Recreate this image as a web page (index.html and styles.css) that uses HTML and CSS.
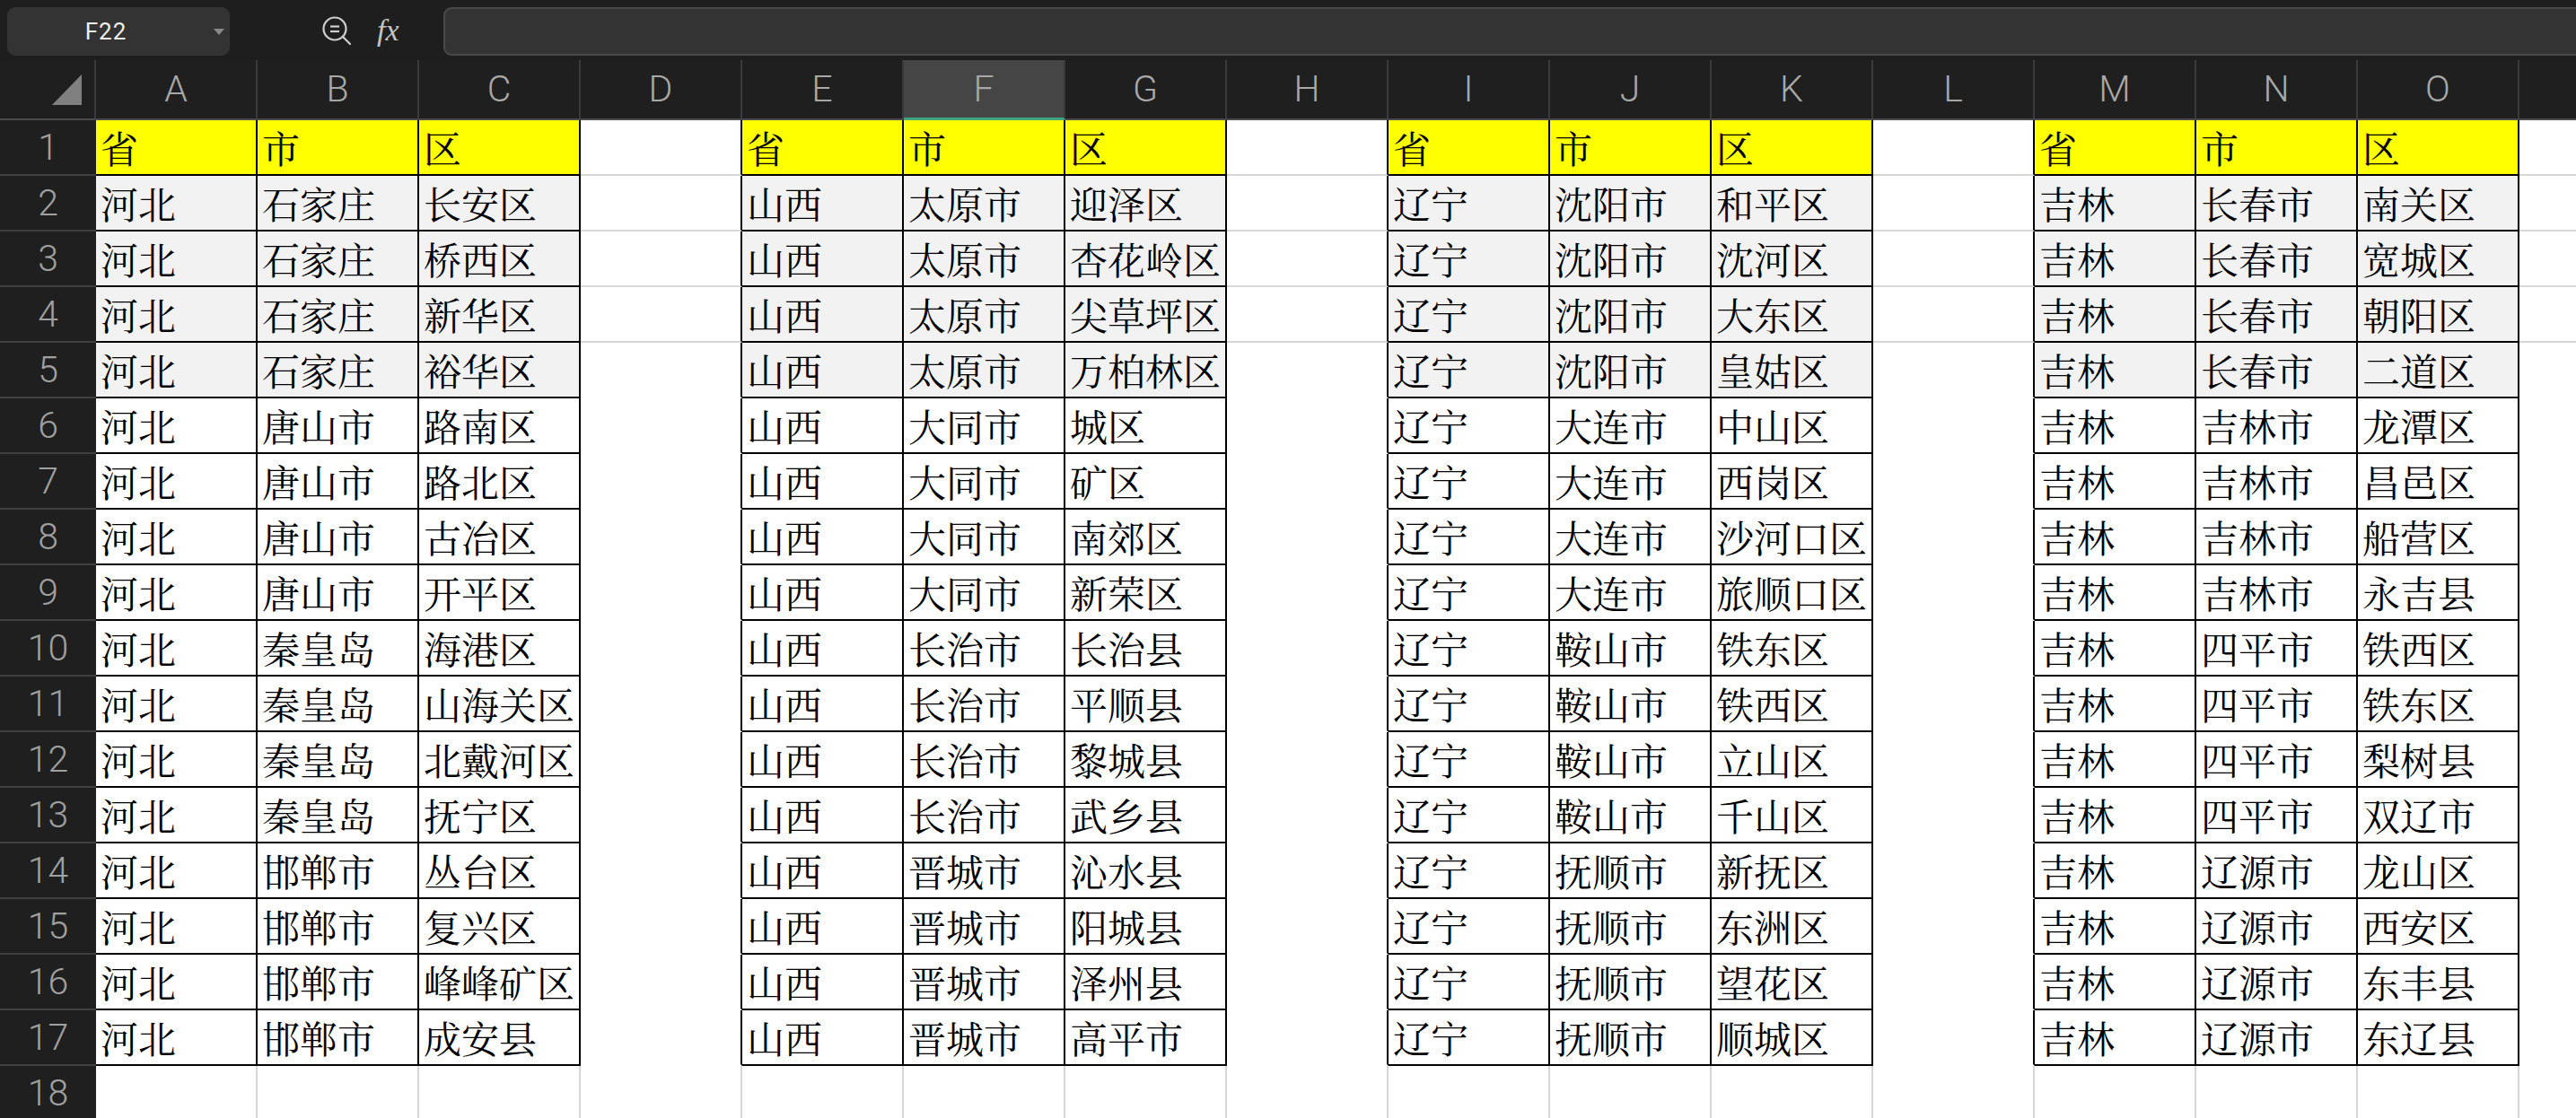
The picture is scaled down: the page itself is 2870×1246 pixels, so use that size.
FILE: index.html
```html
<!DOCTYPE html>
<html lang="zh-CN">
<head>
<meta charset="utf-8">
<title>Sheet</title>
<link rel="stylesheet" href="styles.css">
</head>
<body>
<div class="toolbar">
  <div class="namebox"><span class="ref">F22</span><span class="caret"></span></div>
  <svg class="zoom" width="36" height="36" viewBox="0 0 36 36"><circle cx="18" cy="18" r="12.5" fill="none" stroke="#cfcfcf" stroke-width="2.2"/><line x1="27" y1="27" x2="36" y2="36" stroke="#cfcfcf" stroke-width="2.2" stroke-linecap="round"/><line x1="13" y1="15.5" x2="23" y2="15.5" stroke="#cfcfcf" stroke-width="2.2"/><line x1="13" y1="21" x2="23" y2="21" stroke="#cfcfcf" stroke-width="2.2"/></svg>
  <span class="fx">fx</span>
  <div class="formula"></div>
</div>
<div class="sheet">
  <div class="corner"><svg width="33" height="34" viewBox="0 0 33 34"><polygon points="0,34 33,34 33,0" fill="#808080"/></svg></div>
  <div class="ch">A</div><div class="ch">B</div><div class="ch">C</div><div class="ch">D</div><div class="ch">E</div><div class="ch sel">F</div><div class="ch">G</div><div class="ch">H</div><div class="ch">I</div><div class="ch">J</div><div class="ch">K</div><div class="ch">L</div><div class="ch">M</div><div class="ch">N</div><div class="ch">O</div><div class="ch"></div>

  <div class="rh">1</div>
  <div class="c d y">省</div><div class="c d y">市</div><div class="c d y">区</div><div class="c e g"></div>
  <div class="c d y">省</div><div class="c d y">市</div><div class="c d y">区</div><div class="c e g"></div>
  <div class="c d y">省</div><div class="c d y">市</div><div class="c d y">区</div><div class="c e g"></div>
  <div class="c d y">省</div><div class="c d y">市</div><div class="c d y">区</div><div class="c g"></div>

  <div class="rh">2</div>
  <div class="c d s">河北</div><div class="c d s">石家庄</div><div class="c d s">长安区</div><div class="c e g"></div>
  <div class="c d s">山西</div><div class="c d s">太原市</div><div class="c d s">迎泽区</div><div class="c e g"></div>
  <div class="c d s">辽宁</div><div class="c d s">沈阳市</div><div class="c d s">和平区</div><div class="c e g"></div>
  <div class="c d s">吉林</div><div class="c d s">长春市</div><div class="c d s">南关区</div><div class="c g"></div>

  <div class="rh">3</div>
  <div class="c d s">河北</div><div class="c d s">石家庄</div><div class="c d s">桥西区</div><div class="c e g"></div>
  <div class="c d s">山西</div><div class="c d s">太原市</div><div class="c d s">杏花岭区</div><div class="c e g"></div>
  <div class="c d s">辽宁</div><div class="c d s">沈阳市</div><div class="c d s">沈河区</div><div class="c e g"></div>
  <div class="c d s">吉林</div><div class="c d s">长春市</div><div class="c d s">宽城区</div><div class="c g"></div>

  <div class="rh">4</div>
  <div class="c d s">河北</div><div class="c d s">石家庄</div><div class="c d s">新华区</div><div class="c e g"></div>
  <div class="c d s">山西</div><div class="c d s">太原市</div><div class="c d s">尖草坪区</div><div class="c e g"></div>
  <div class="c d s">辽宁</div><div class="c d s">沈阳市</div><div class="c d s">大东区</div><div class="c e g"></div>
  <div class="c d s">吉林</div><div class="c d s">长春市</div><div class="c d s">朝阳区</div><div class="c g"></div>

  <div class="rh">5</div>
  <div class="c d s">河北</div><div class="c d s">石家庄</div><div class="c d s">裕华区</div><div class="c e"></div>
  <div class="c d s">山西</div><div class="c d s">太原市</div><div class="c d s">万柏林区</div><div class="c e"></div>
  <div class="c d s">辽宁</div><div class="c d s">沈阳市</div><div class="c d s">皇姑区</div><div class="c e"></div>
  <div class="c d s">吉林</div><div class="c d s">长春市</div><div class="c d s">二道区</div><div class="c"></div>

  <div class="rh">6</div>
  <div class="c d">河北</div><div class="c d">唐山市</div><div class="c d">路南区</div><div class="c e"></div>
  <div class="c d">山西</div><div class="c d">大同市</div><div class="c d">城区</div><div class="c e"></div>
  <div class="c d">辽宁</div><div class="c d">大连市</div><div class="c d">中山区</div><div class="c e"></div>
  <div class="c d">吉林</div><div class="c d">吉林市</div><div class="c d">龙潭区</div><div class="c"></div>

  <div class="rh">7</div>
  <div class="c d">河北</div><div class="c d">唐山市</div><div class="c d">路北区</div><div class="c e"></div>
  <div class="c d">山西</div><div class="c d">大同市</div><div class="c d">矿区</div><div class="c e"></div>
  <div class="c d">辽宁</div><div class="c d">大连市</div><div class="c d">西岗区</div><div class="c e"></div>
  <div class="c d">吉林</div><div class="c d">吉林市</div><div class="c d">昌邑区</div><div class="c"></div>

  <div class="rh">8</div>
  <div class="c d">河北</div><div class="c d">唐山市</div><div class="c d">古冶区</div><div class="c e"></div>
  <div class="c d">山西</div><div class="c d">大同市</div><div class="c d">南郊区</div><div class="c e"></div>
  <div class="c d">辽宁</div><div class="c d">大连市</div><div class="c d">沙河口区</div><div class="c e"></div>
  <div class="c d">吉林</div><div class="c d">吉林市</div><div class="c d">船营区</div><div class="c"></div>

  <div class="rh">9</div>
  <div class="c d">河北</div><div class="c d">唐山市</div><div class="c d">开平区</div><div class="c e"></div>
  <div class="c d">山西</div><div class="c d">大同市</div><div class="c d">新荣区</div><div class="c e"></div>
  <div class="c d">辽宁</div><div class="c d">大连市</div><div class="c d">旅顺口区</div><div class="c e"></div>
  <div class="c d">吉林</div><div class="c d">吉林市</div><div class="c d">永吉县</div><div class="c"></div>

  <div class="rh">10</div>
  <div class="c d">河北</div><div class="c d">秦皇岛</div><div class="c d">海港区</div><div class="c e"></div>
  <div class="c d">山西</div><div class="c d">长治市</div><div class="c d">长治县</div><div class="c e"></div>
  <div class="c d">辽宁</div><div class="c d">鞍山市</div><div class="c d">铁东区</div><div class="c e"></div>
  <div class="c d">吉林</div><div class="c d">四平市</div><div class="c d">铁西区</div><div class="c"></div>

  <div class="rh">11</div>
  <div class="c d">河北</div><div class="c d">秦皇岛</div><div class="c d">山海关区</div><div class="c e"></div>
  <div class="c d">山西</div><div class="c d">长治市</div><div class="c d">平顺县</div><div class="c e"></div>
  <div class="c d">辽宁</div><div class="c d">鞍山市</div><div class="c d">铁西区</div><div class="c e"></div>
  <div class="c d">吉林</div><div class="c d">四平市</div><div class="c d">铁东区</div><div class="c"></div>

  <div class="rh">12</div>
  <div class="c d">河北</div><div class="c d">秦皇岛</div><div class="c d">北戴河区</div><div class="c e"></div>
  <div class="c d">山西</div><div class="c d">长治市</div><div class="c d">黎城县</div><div class="c e"></div>
  <div class="c d">辽宁</div><div class="c d">鞍山市</div><div class="c d">立山区</div><div class="c e"></div>
  <div class="c d">吉林</div><div class="c d">四平市</div><div class="c d">梨树县</div><div class="c"></div>

  <div class="rh">13</div>
  <div class="c d">河北</div><div class="c d">秦皇岛</div><div class="c d">抚宁区</div><div class="c e"></div>
  <div class="c d">山西</div><div class="c d">长治市</div><div class="c d">武乡县</div><div class="c e"></div>
  <div class="c d">辽宁</div><div class="c d">鞍山市</div><div class="c d">千山区</div><div class="c e"></div>
  <div class="c d">吉林</div><div class="c d">四平市</div><div class="c d">双辽市</div><div class="c"></div>

  <div class="rh">14</div>
  <div class="c d">河北</div><div class="c d">邯郸市</div><div class="c d">丛台区</div><div class="c e"></div>
  <div class="c d">山西</div><div class="c d">晋城市</div><div class="c d">沁水县</div><div class="c e"></div>
  <div class="c d">辽宁</div><div class="c d">抚顺市</div><div class="c d">新抚区</div><div class="c e"></div>
  <div class="c d">吉林</div><div class="c d">辽源市</div><div class="c d">龙山区</div><div class="c"></div>

  <div class="rh">15</div>
  <div class="c d">河北</div><div class="c d">邯郸市</div><div class="c d">复兴区</div><div class="c e"></div>
  <div class="c d">山西</div><div class="c d">晋城市</div><div class="c d">阳城县</div><div class="c e"></div>
  <div class="c d">辽宁</div><div class="c d">抚顺市</div><div class="c d">东洲区</div><div class="c e"></div>
  <div class="c d">吉林</div><div class="c d">辽源市</div><div class="c d">西安区</div><div class="c"></div>

  <div class="rh">16</div>
  <div class="c d">河北</div><div class="c d">邯郸市</div><div class="c d">峰峰矿区</div><div class="c e"></div>
  <div class="c d">山西</div><div class="c d">晋城市</div><div class="c d">泽州县</div><div class="c e"></div>
  <div class="c d">辽宁</div><div class="c d">抚顺市</div><div class="c d">望花区</div><div class="c e"></div>
  <div class="c d">吉林</div><div class="c d">辽源市</div><div class="c d">东丰县</div><div class="c"></div>

  <div class="rh">17</div>
  <div class="c d">河北</div><div class="c d">邯郸市</div><div class="c d">成安县</div><div class="c e"></div>
  <div class="c d">山西</div><div class="c d">晋城市</div><div class="c d">高平市</div><div class="c e"></div>
  <div class="c d">辽宁</div><div class="c d">抚顺市</div><div class="c d">顺城区</div><div class="c e"></div>
  <div class="c d">吉林</div><div class="c d">辽源市</div><div class="c d">东辽县</div><div class="c"></div>

  <div class="rh">18</div>
  <div class="c z"></div><div class="c z"></div><div class="c z"></div><div class="c z"></div>
  <div class="c z"></div><div class="c z"></div><div class="c z"></div><div class="c z"></div>
  <div class="c z"></div><div class="c z"></div><div class="c z"></div><div class="c z"></div>
  <div class="c z"></div><div class="c z"></div><div class="c z"></div><div class="c z"></div>
</div>
</body>
</html>
```

FILE: styles.css
```css
* { box-sizing: border-box; }
html, body { margin: 0; padding: 0; }
body {
  background: #1e1e1e;
  width: 2870px;
  height: 1246px;
  overflow: hidden;
  font-family: Roboto, "Liberation Sans", sans-serif;
}

.toolbar {
  height: 67px;
  display: flex;
  align-items: flex-start;
  padding: 8px 0 0 8px;
  background: #1e1e1e;
}
.namebox {
  flex: none;
  width: 248px;
  height: 54px;
  background: #333333;
  border-radius: 9px;
  display: flex;
  align-items: center;
}
.namebox .ref {
  width: 220px;
  text-align: center;
  color: #efefef;
  font-size: 26px;
  letter-spacing: 1px;
}
.namebox .caret {
  width: 0;
  height: 0;
  margin-left: 10px;
  border-left: 6px solid transparent;
  border-right: 6px solid transparent;
  border-top: 7px solid #8a8a8a;
}
.zoom {
  flex: none;
  margin: 6px 0 0 99px;
}
.fx {
  flex: none;
  width: 40px;
  margin: 6px 0 0 29px;
  font-family: "Liberation Serif", serif;
  font-style: italic;
  font-size: 34px;
  line-height: 40px;
  color: #c4c4c4;
}
.formula {
  flex: 1;
  height: 54px;
  margin: 0 -20px 0 34px;
  background: #333333;
  border: 2px solid #494949;
  border-radius: 9px;
}

.sheet {
  display: grid;
  grid-template-columns: 107px repeat(16, 180px);
  grid-template-rows: 67px repeat(18, 62px);
  background: #ffffff;
}
.corner {
  background: #1f1f1f;
  border-right: 2px solid #3a3a3a;
  border-bottom: 2px solid #4b4b4b;
  display: flex;
  justify-content: flex-end;
  align-items: flex-end;
  padding: 0 14px 15px 0;
}
.ch {
  background: #1f1f1f;
  border-right: 2px solid #3a3a3a;
  border-bottom: 2px solid #4b4b4b;
  color: #a8a8a8;
  font-size: 41px;
  font-weight: 300;
  line-height: 65px;
  text-align: center;
}
.ch.sel {
  background: #454545;
  border-bottom: 3px solid #3fa57c;
}
.rh {
  background: #1f1f1f;
  border-bottom: 2px solid #404040;
  color: #a0a0a0;
  font-size: 41px;
  font-weight: 300;
  line-height: 60px;
  text-align: center;
}

.c {
  background: #ffffff;
  border-right: 2px solid #ffffff;
  border-bottom: 2px solid #ffffff;
  padding-left: 5px;
  font-family: "Noto Serif CJK SC", "Source Han Serif SC", "Noto Sans CJK SC", serif;
  font-size: 42px;
  line-height: 60px;
  color: #000000;
  white-space: nowrap;
  overflow: hidden;
}
.d { border-color: #000000; }
.y { background: #ffff00; }
.s { background: #f2f2f2; }
.e { border-right-color: #000000; }
.g { border-bottom-color: #d6d6d6; }
.z { border-right-color: #d6d6d6; }
```
